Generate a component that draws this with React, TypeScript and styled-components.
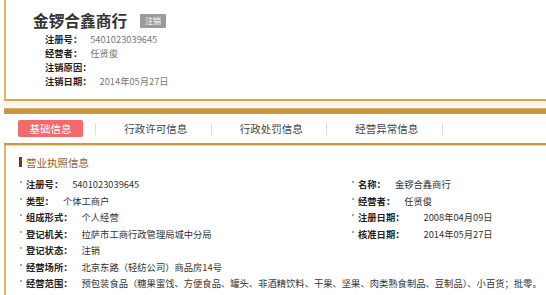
import styled, { createGlobalStyle } from "styled-components";

const GlobalStyle = createGlobalStyle`
  body {
    margin: 0;
    background: #ffffff;
    font-family: "Noto Sans CJK SC", "Noto Sans", sans-serif;
    color: #333;
  }
`;

const topInfo = [
  { label: "注册号：", value: "5401023039645" },
  { label: "经营者：", value: "任贤俊" },
  { label: "注销原因：", value: "" },
  { label: "注销日期：", value: "2014年05月27日" },
];

const tabs = ["行政许可信息", "行政处罚信息", "经营异常信息"];

type Field = { label: string; value: string; full?: boolean; wide?: boolean };

const fields: Field[] = [
  { label: "注册号：", value: "5401023039645" },
  { label: "名称：", value: "金锣合鑫商行" },
  { label: "类型：", value: "个体工商户" },
  { label: "经营者：", value: "任贤俊" },
  { label: "组成形式：", value: "个人经营" },
  { label: "注册日期：", value: "2008年04月09日", wide: true },
  { label: "登记机关：", value: "拉萨市工商行政管理局城中分局" },
  { label: "核准日期：", value: "2014年05月27日", wide: true },
  { label: "登记状态：", value: "注销", full: true },
  { label: "经营场所：", value: "北京东路（轻纺公司）商品房14号", full: true },
  {
    label: "经营范围：",
    value:
      "预包装食品（糖果蜜饯、方便食品、罐头、非酒精饮料、干果、坚果、肉类熟食制品、豆制品）、小百货；批零。",
    full: true,
  },
];

const App = () => {
  return (
    <>
      <GlobalStyle />
      <Page>
        <Card>
          <TitleRow>
            <Title>金锣合鑫商行</Title>
            <Badge>注销</Badge>
          </TitleRow>
          <InfoList>
            {topInfo.map((row) => (
              <InfoRow key={row.label}>
                <InfoLabel>{row.label}</InfoLabel>
                <InfoValue>{row.value}</InfoValue>
              </InfoRow>
            ))}
          </InfoList>
        </Card>
        <Gap />
        <GoldBar />
        <TabBar>
          <ActiveTab>基础信息</ActiveTab>
          <Sep />
          {tabs.map((t) => (
            <TabGroup key={t}>
              <TabItem>{t}</TabItem>
              <Sep />
            </TabGroup>
          ))}
        </TabBar>
        <Section>
          <SectionHeader>
            <Marker />
            营业执照信息
          </SectionHeader>
          <FieldGrid>
            {fields.map((f) => (
              <FieldItem key={f.label} $full={f.full}>
                <FieldLabel>{f.label}</FieldLabel>
                <FieldValue $wide={f.wide}>{f.value}</FieldValue>
              </FieldItem>
            ))}
          </FieldGrid>
        </Section>
      </Page>
    </>
  );
};

export default App;

const Page = styled.div`
  margin-left: 4px;
  width: 542px;
  height: 295px;
  overflow: hidden;
`;

const Card = styled.div`
  border-left: 2px solid #e2b65c;
  border-bottom: 2px solid #d6a64e;
  padding: 10px 0 11px 27px;
`;

const TitleRow = styled.div`
  display: flex;
  align-items: center;
  gap: 13px;
  height: 22px;
`;

const Title = styled.h1`
  margin: 0;
  font-size: 15.7px;
  line-height: 22px;
  font-weight: 700;
  color: #333;
`;

const Badge = styled.span`
  display: inline-block;
  height: 14px;
  line-height: 14px;
  padding: 0 5px;
  font-size: 8px;
  color: #fff;
  background: #9b9b9b;
  border-radius: 1px;
`;

const InfoList = styled.div`
  padding-left: 12px;
`;

const InfoRow = styled.div`
  display: flex;
  height: 14px;
  line-height: 14px;
  font-size: 9.3px;
  white-space: nowrap;
`;

const InfoLabel = styled.span`
  font-weight: 700;
  color: #222;
`;

const InfoValue = styled.span`
  margin-left: 8px;
  color: #777;
`;

const Gap = styled.div`
  height: 7px;
  background: linear-gradient(#f3f0e6, #fbfaf7);
`;

const GoldBar = styled.div`
  height: 5px;
  background: #c9963b;
  border-top: 1px solid #d9b068;
`;

const TabBar = styled.div`
  display: flex;
  align-items: center;
  height: 29px;
  padding-left: 14px;
  border-bottom: 2px solid #c99a40;
  box-shadow: 0 1px 0 #ecd6a6;
`;

const ActiveTab = styled.div`
  width: 65px;
  height: 17px;
  line-height: 17px;
  text-align: center;
  font-size: 10.5px;
  color: #fff;
  background: #f26a6b;
  border-radius: 2px;
  margin-right: 12px;
`;

const Sep = styled.span`
  width: 1px;
  height: 12px;
  background: #dddddd;
`;

const TabGroup = styled.div`
  display: flex;
  align-items: center;
`;

const TabItem = styled.div`
  width: 114.5px;
  box-sizing: border-box;
  padding-left: 5px;
  text-align: center;
  font-size: 10.5px;
  color: #444;
`;

const Section = styled.div`
  border-left: 2px solid #e2b65c;
  padding: 11px 0 0 13px;
  height: 200px;
`;

const SectionHeader = styled.div`
  display: flex;
  align-items: center;
  height: 12px;
  font-size: 10.5px;
  color: #8c6239;
`;

const Marker = styled.span`
  width: 3px;
  height: 10px;
  background: #6e3c1a;
  margin-right: 4px;
`;

const FieldGrid = styled.div`
  display: grid;
  grid-template-columns: 332px 1fr;
  grid-auto-rows: 16.5px;
  margin-top: 8px;
  padding-left: 1px;
`;

const FieldItem = styled.div<{ $full?: boolean }>`
  display: flex;
  align-items: center;
  white-space: nowrap;
  font-size: 9.3px;
  grid-column: ${(p) => (p.$full ? "1 / -1" : "auto")};

  &::before {
    content: "";
    width: 2px;
    height: 2px;
    margin: 0 4px 4px 0;
    background: #888;
    border-radius: 1px;
  }
`;

const FieldLabel = styled.span`
  font-weight: 700;
  color: #222;
`;

const FieldValue = styled.span<{ $wide?: boolean }>`
  margin-left: ${(p) => (p.$wide ? "19px" : "9px")};
  color: #333;
`;
